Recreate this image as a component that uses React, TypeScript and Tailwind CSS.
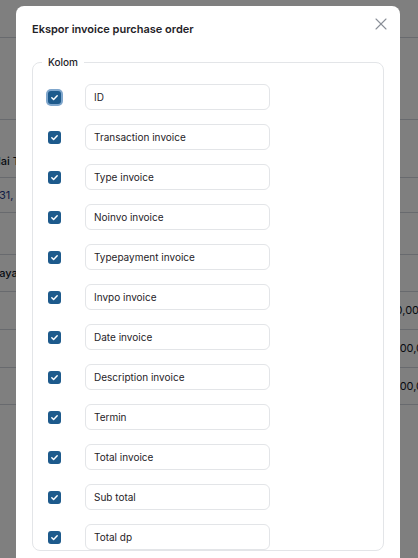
import { X } from 'lucide-react'

const columns = [
  'ID',
  'Transaction invoice',
  'Type invoice',
  'Noinvo invoice',
  'Typepayment invoice',
  'Invpo invoice',
  'Date invoice',
  'Description invoice',
  'Termin',
  'Total invoice',
  'Sub total',
  'Total dp',
]

function Checkbox({ focused }: { focused?: boolean }) {
  return (
    <div
      className={
        'w-[13px] h-[13px] rounded-[3px] bg-[#1d5a8c] flex items-center justify-center ' +
        (focused ? 'ring-2 ring-[#7fa6cc]' : '')
      }
    >
      <svg width="9" height="9" viewBox="0 0 10 10" fill="none">
        <path d="M2 5.3l2 2L8 3" stroke="white" strokeWidth="1.6" strokeLinecap="round" strokeLinejoin="round" />
      </svg>
    </div>
  )
}

function BackgroundPage() {
  return (
    <div className="absolute inset-0 bg-white text-[11px] text-[#111827] font-['Inter',sans-serif]">
      <div className="h-[38px] border-b border-gray-300" />
      <div className="h-[82px] border-b border-gray-300" />
      <div className="h-[58px] border-b border-gray-300 flex items-end pb-[8px]">
        <span className="-ml-[13px] font-medium whitespace-nowrap">Nilai Tagihan</span>
      </div>
      <div className="h-[35px] border-b border-gray-300 flex items-center">
        <span className="-ml-[1px] text-[#1e3a8a] whitespace-nowrap">31, 2024</span>
      </div>
      <div className="h-[42px] border-b border-gray-300" />
      <div className="h-[37px] border-b border-gray-300 flex items-center">
        <span className="-ml-[8px] font-medium whitespace-nowrap">Bayar</span>
      </div>
      <div className="h-[38px] border-b border-gray-300 flex items-center justify-end">
        <span className="mr-[-8px] whitespace-nowrap">100,000</span>
      </div>
      <div className="h-[38px] border-b border-gray-300 flex items-center justify-end">
        <span className="mr-[-12px] whitespace-nowrap">1.000,00</span>
      </div>
      <div className="h-[37px] border-b border-gray-300 flex items-center justify-end">
        <span className="mr-[-12px] whitespace-nowrap">1.000,00</span>
      </div>
    </div>
  )
}

export default function App() {
  return (
    <div className="relative w-[418px] h-[558px] overflow-hidden font-['Inter',sans-serif]">
      <BackgroundPage />
      <div className="absolute inset-0 bg-black/50" />
      <div className="absolute left-4 top-[6px] w-[384px] h-[600px] bg-white rounded-lg px-4">
        <div className="flex items-start justify-between pt-[15px]">
          <h2 className="text-[11px] font-semibold text-[#1f2328] leading-[16px]">
            Ekspor invoice purchase order
          </h2>
          <X className="w-[20px] h-[20px] text-[#8a8f98] -mt-[7px] -mr-[7px]" strokeWidth={1.3} />
        </div>
        <fieldset className="mt-[18px] border border-[#e3e5e8] rounded-[8px] pl-[15px] pr-4 pt-[15px]">
          <legend className="px-[6px] -ml-[6px] text-[10px] font-medium text-[#1f2328] leading-[14px]">
            Kolom
          </legend>
          <div className="flex flex-col gap-[14px]">
            {columns.map((c, i) => (
              <div key={c} className="flex items-center">
                <div className="w-[37px] flex items-center">
                  <Checkbox focused={i === 0} />
                </div>
                <div className="w-[185px] h-[26px] border border-[#e3e5e8] rounded-[6px] flex items-center pl-[8px] text-[10px] text-[#1f2328]">
                  {c}
                </div>
              </div>
            ))}
          </div>
        </fieldset>
      </div>
    </div>
  )
}
